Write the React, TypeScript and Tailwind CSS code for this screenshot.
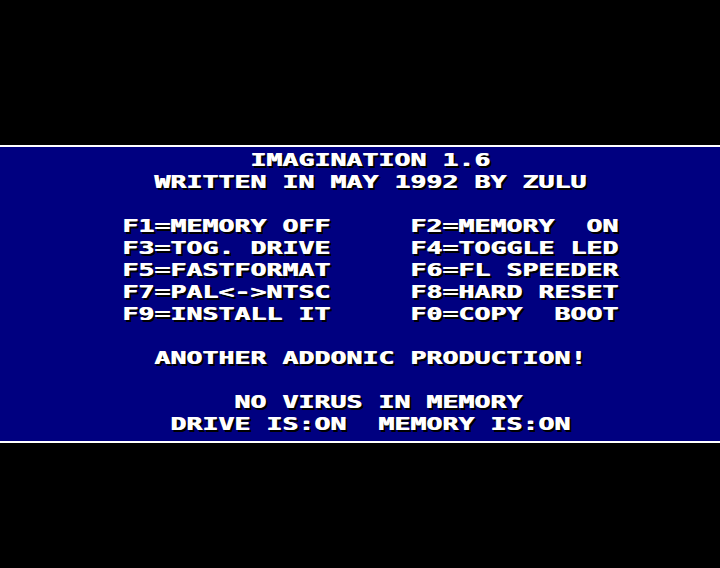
import React from 'react';

const rows: string[] = [
  '               IMAGINATION 1.6',
  '         WRITTEN IN MAY 1992 BY ZULU',
  '',
  '       F1=MEMORY OFF     F2=MEMORY  ON',
  '       F3=TOG. DRIVE     F4=TOGGLE LED',
  '       F5=FASTFORMAT     F6=FL SPEEDER',
  '       F7=PAL<->NTSC     F8=HARD RESET',
  '       F9=INSTALL IT     F0=COPY  BOOT',
  '',
  '         ANOTHER ADDONIC PRODUCTION!',
  '',
  '              NO VIRUS IN MEMORY',
  '          DRIVE IS:ON  MEMORY IS:ON',
];

export default function App() {
  return (
    <div className="w-[720px] h-[568px] bg-black overflow-hidden pt-[145px]">
      <div className="h-[298px] bg-[#000080] border-y-2 border-white pt-[2px] overflow-hidden">
        {/* text is stretched horizontally to get the wide 16px character cells */}
        <div className="origin-left scale-x-[1.5633] pl-[6.4px] font-['DejaVu_Sans_Mono',monospace] font-bold text-[17px] leading-[22px] text-white [text-shadow:0.6px_0_0_#fff,1.3px_2px_0_#000,1.9px_2px_0_#000]">
          {rows.map((row, i) => (
            <div key={i} className="h-[22px] whitespace-pre">
              {row}
            </div>
          ))}
        </div>
      </div>
    </div>
  );
}
